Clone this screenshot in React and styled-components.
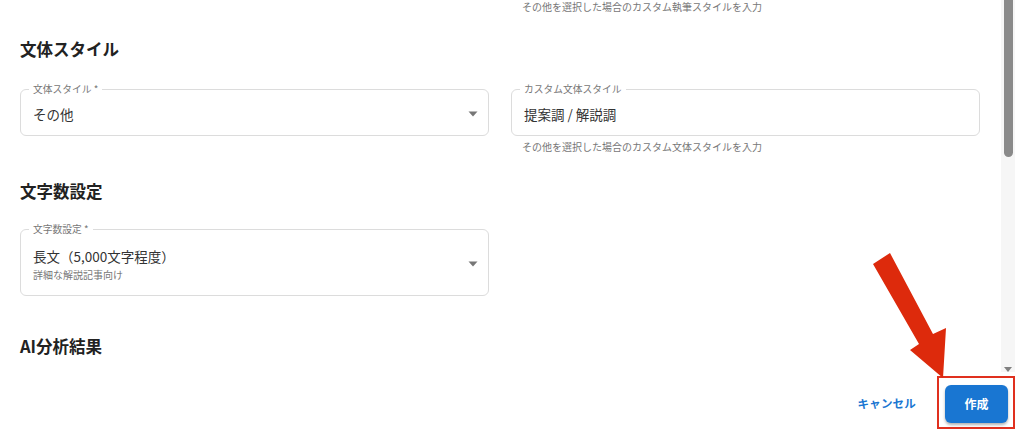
import React from "react";
import styled, { createGlobalStyle } from "styled-components";

const GlobalStyle = createGlobalStyle`
  html, body {
    margin: 0;
    padding: 0;
    background: #fff;
  }
  body {
    font-family: "Noto Sans CJK JP", "Noto Sans", sans-serif;
    color: #222;
  }
  * { box-sizing: border-box; }
`;

const Dialog = styled.div`
  position: relative;
  width: 1024px;
  height: 439px;
  display: flex;
  flex-direction: column;
  background: #fff;
  overflow: hidden;
`;

const Body = styled.div`
  display: flex;
  height: 372px;
  padding-right: 9px;
`;

const Content = styled.div`
  flex: 1;
  padding: 0 21px 0 20px;
  overflow: hidden;
`;

const Grid = styled.div`
  display: grid;
  grid-template-columns: 469px 469px;
  column-gap: 22px;
  margin-top: ${(p) => p.$top || 0}px;
`;

const Helper = styled.div`
  padding-left: 11px;
  margin-top: ${(p) => p.$top || 0}px;
  font-size: 10px;
  line-height: 14px;
  color: #777;
  white-space: nowrap;
`;

const Heading = styled.h2`
  margin: ${(p) => p.$top}px 0 0;
  font-size: 16.5px;
  line-height: 20px;
  font-weight: 700;
  color: #222;
`;

const Field = styled.div`
  position: relative;
  height: ${(p) => p.$height}px;
  border: 1px solid #dcdcdc;
  border-radius: 6px;
  display: flex;
  align-items: center;
  gap: 8px;
  padding-top: 2px;
  padding-left: 12px;
  padding-right: 10px;
`;

const Label = styled.span`
  position: absolute;
  top: -7px;
  left: 8px;
  padding: 0 4px;
  background: #fff;
  font-size: 9.75px;
  line-height: 13px;
  color: #777;
  white-space: nowrap;
`;

const Values = styled.div`
  flex: 1;
  display: flex;
  flex-direction: column;
`;

const Value = styled.span`
  font-size: 13.5px;
  line-height: 20px;
  color: #333;
`;

const Sub = styled.span`
  font-size: 10px;
  line-height: 14px;
  color: #777;
  margin-top: 2px;
`;

const Scrollbar = styled.div`
  width: 14px;
  display: flex;
  flex-direction: column;
  justify-content: space-between;
  align-items: center;
  background: #f6f6f6;
`;

const Thumb = styled.div`
  width: 9px;
  height: 157px;
  background: #8a8a8a;
  border-radius: 0 0 5px 5px;
`;

const ScrollArrow = styled.div`
  width: 0;
  height: 0;
  border-left: 4px solid transparent;
  border-right: 4px solid transparent;
  border-top: 5px solid #808080;
`;

const Footer = styled.div`
  flex: 1;
  display: flex;
  align-items: center;
  justify-content: flex-end;
  gap: 21px;
  padding: 0 9px 7px 0;
`;

const TextButton = styled.button`
  border: 0;
  background: none;
  padding: 0;
  font-family: inherit;
  font-size: 11.5px;
  font-weight: 700;
  color: #1976d2;
  letter-spacing: 0.2px;
  margin-top: 2px;
`;

const Highlight = styled.div`
  border: 2px solid #e0301e;
  padding: 7px 5px 4px 6px;
`;

const PrimaryButton = styled.button`
  width: 63px;
  height: 38px;
  border: 0;
  border-radius: 6px;
  background: #1976d2;
  color: #fff;
  font-family: inherit;
  font-size: 12px;
  font-weight: 700;
  box-shadow: 0 2px 3px rgba(0, 0, 0, 0.3);
`;

const Arrow = styled.svg`
  position: absolute;
  left: 0;
  top: 0;
  pointer-events: none;
`;

const DropIcon = () => (
  <svg width="10" height="6" viewBox="0 0 10 6">
    <path d="M0.5 0.5 L9.5 0.5 L5 5.5 Z" fill="#777" />
  </svg>
);

export default function App() {
  return (
    <>
      <GlobalStyle />
      <Dialog>
        <Body>
          <Content>
            <Grid>
              <div />
              <Helper>その他を選択した場合のカスタム執筆スタイルを入力</Helper>
            </Grid>

            <Heading $top={25}>文体スタイル</Heading>
            <Grid $top={30}>
              <Field $height={47}>
                <Label>文体スタイル *</Label>
                <Values>
                  <Value>その他</Value>
                </Values>
                <DropIcon />
              </Field>
              <div>
                <Field $height={47}>
                  <Label>カスタム文体スタイル</Label>
                  <Values>
                    <Value>提案調 / 解説調</Value>
                  </Values>
                </Field>
                <Helper $top={4}>その他を選択した場合のカスタム文体スタイルを入力</Helper>
              </div>
            </Grid>

            <Heading $top={27}>文字数設定</Heading>
            <Grid $top={28}>
              <Field $height={67}>
                <Label>文字数設定 *</Label>
                <Values>
                  <Value>長文（5,000文字程度）</Value>
                  <Sub>詳細な解説記事向け</Sub>
                </Values>
                <DropIcon />
              </Field>
            </Grid>

            <Heading $top={40}>AI分析結果</Heading>
          </Content>
          <Scrollbar>
            <Thumb />
            <ScrollArrow />
          </Scrollbar>
        </Body>
        <Footer>
          <TextButton>キャンセル</TextButton>
          <Highlight>
            <PrimaryButton>作成</PrimaryButton>
          </Highlight>
        </Footer>
        <Arrow width="1024" height="439" viewBox="0 0 1024 439">
          <polygon
            points="873,264 890,253 933,334 946,328 943,378 910,350 919,344"
            fill="#dd2a0c"
          />
        </Arrow>
      </Dialog>
    </>
  );
}
